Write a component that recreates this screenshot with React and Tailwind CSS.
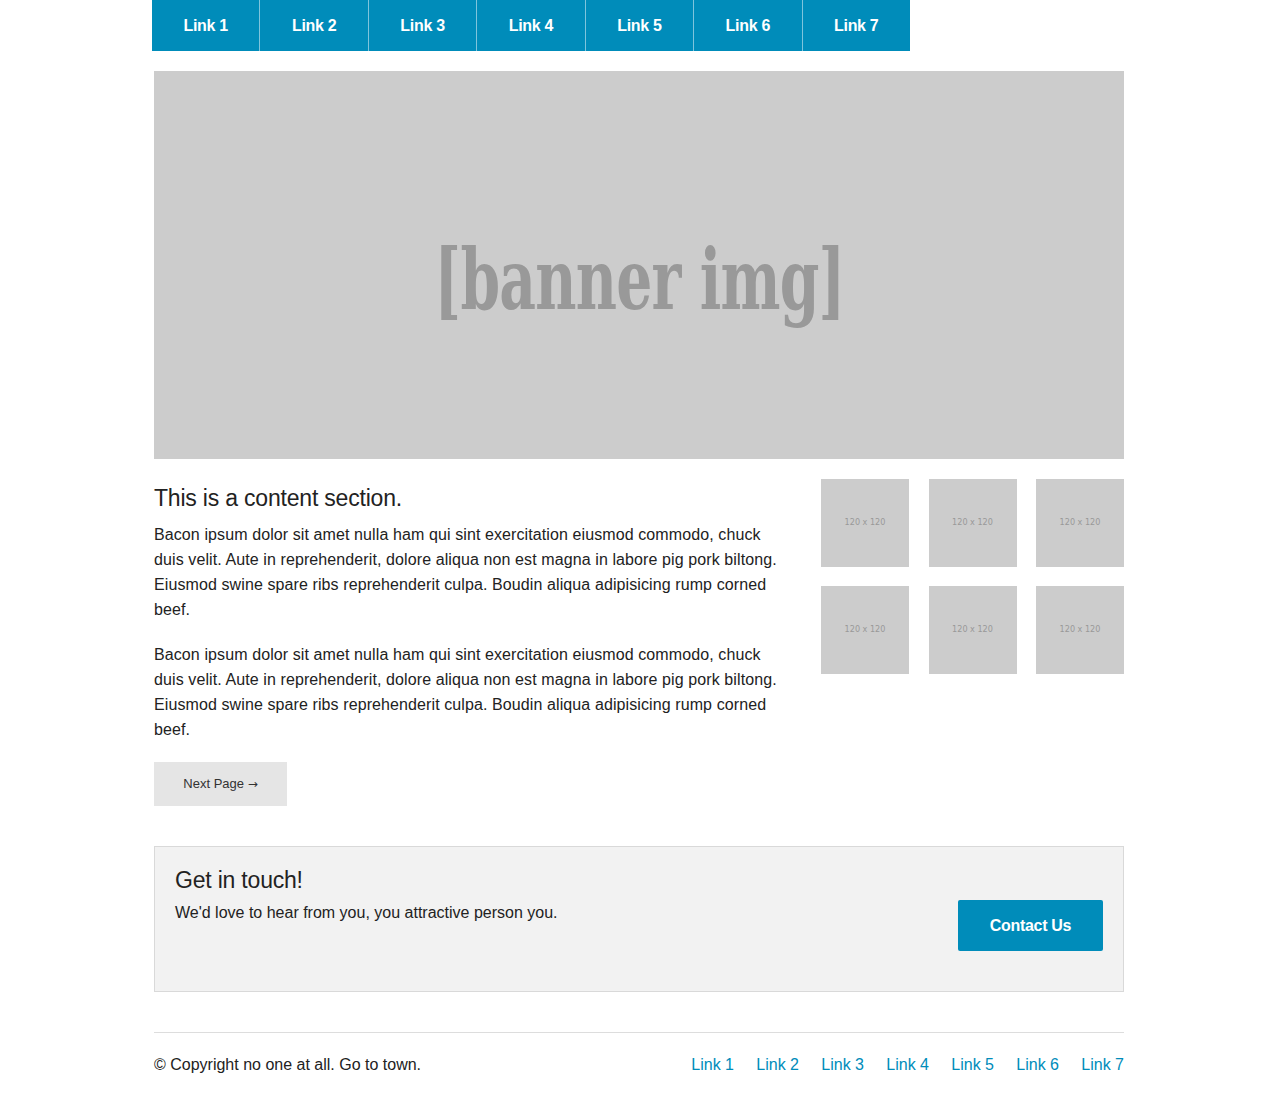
import React from "react";

const links = ["Link 1", "Link 2", "Link 3", "Link 4", "Link 5", "Link 6", "Link 7"];

const bacon =
  "Bacon ipsum dolor sit amet nulla ham qui sint exercitation eiusmod commodo, chuck duis velit. Aute in reprehenderit, dolore aliqua non est magna in labore pig pork biltong. Eiusmod swine spare ribs reprehenderit culpa. Boudin aliqua adipisicing rump corned beef.";

function Thumb() {
  return (
    <div className="w-[88px] h-[88px] bg-[#cccccc] flex items-center justify-center">
      <span className="text-[9px] text-[#999] font-['DejaVu_Sans_Condensed',sans-serif]">120 x 120</span>
    </div>
  );
}

export default function App() {
  return (
    <div className="bg-white text-[#222] font-['Liberation_Sans',Arial,sans-serif]">
      <div className="w-[972px] mx-auto pl-[1px]">
        {/* Top nav */}
        <nav className="flex w-[758px] -ml-[2px] h-[51px] bg-[#008cba]">
          {links.map((l, i) => (
            <a
              key={l}
              href="#"
              className={`flex-1 flex items-center justify-center text-white font-bold text-[16px] tracking-[-0.3px] ${i > 0 ? "border-l border-[#7fc4dc]" : ""}`}
            >
              {l}
            </a>
          ))}
        </nav>

        {/* Banner */}
        <div className="mt-[20px] h-[388px] w-[970px] bg-[#cccccc] flex items-center justify-center">
          <span className="text-[#999] font-bold text-[84px] leading-none font-['DejaVu_Serif_Condensed','DejaVu_Serif',serif] scale-x-[0.75] tracking-[-1px] translate-y-[15px]">
            [banner img]
          </span>
        </div>

        {/* Content */}
        <div className="mt-[20px] flex w-[970px] justify-between">
          <div className="w-[624px]">
            <h2 className="text-[23px] leading-[32px] mt-[3px] mb-[8px] tracking-[-0.2px]">This is a content section.</h2>
            <p className="text-[16px] leading-[25px] mb-[20px] tracking-[0.1px]">{bacon}</p>
            <p className="text-[16px] leading-[25px] mb-[20px] tracking-[0.1px]">{bacon}</p>
            <button className="w-[133px] h-[44px] bg-[#e5e5e5] text-[13px] text-[#333]">
              Next Page <span className="font-['DejaVu_Sans',sans-serif] text-[12px]">&rarr;</span>
            </button>
          </div>
          <div className="w-[303px] grid grid-cols-[88px_88px_88px] gap-y-[19px] content-start justify-between">
            {Array.from({ length: 6 }).map((_, i) => (
              <Thumb key={i} />
            ))}
          </div>
        </div>

        {/* Callout panel */}
        <div className="mt-[40px] w-[970px] h-[146px] bg-[#f2f2f2] border border-[#d9d9d9] px-[20px] pt-[17px] flex justify-between">
          <div>
            <h3 className="text-[23px] leading-[32px] tracking-[-0.2px]">Get in touch!</h3>
            <p className="text-[16px] leading-[25px] mt-[4px]">We'd love to hear from you, you attractive person you.</p>
          </div>
          <button className="mt-[36px] w-[145px] h-[51px] bg-[#008cba] text-white font-bold text-[16px] rounded-[2px] tracking-[-0.3px]">
            Contact Us
          </button>
        </div>

        {/* Footer */}
        <footer className="mt-[40px] w-[970px] border-t border-[#dddddd] pt-[19px] pb-[20px] flex justify-between text-[16px] leading-[25px]">
          <p>&copy; Copyright no one at all. Go to town.</p>
          <ul className="flex gap-[22.3px]">
            {links.map((l) => (
              <li key={l}>
                <a href="#" className="text-[#008cba]">{l}</a>
              </li>
            ))}
          </ul>
        </footer>
      </div>
    </div>
  );
}
